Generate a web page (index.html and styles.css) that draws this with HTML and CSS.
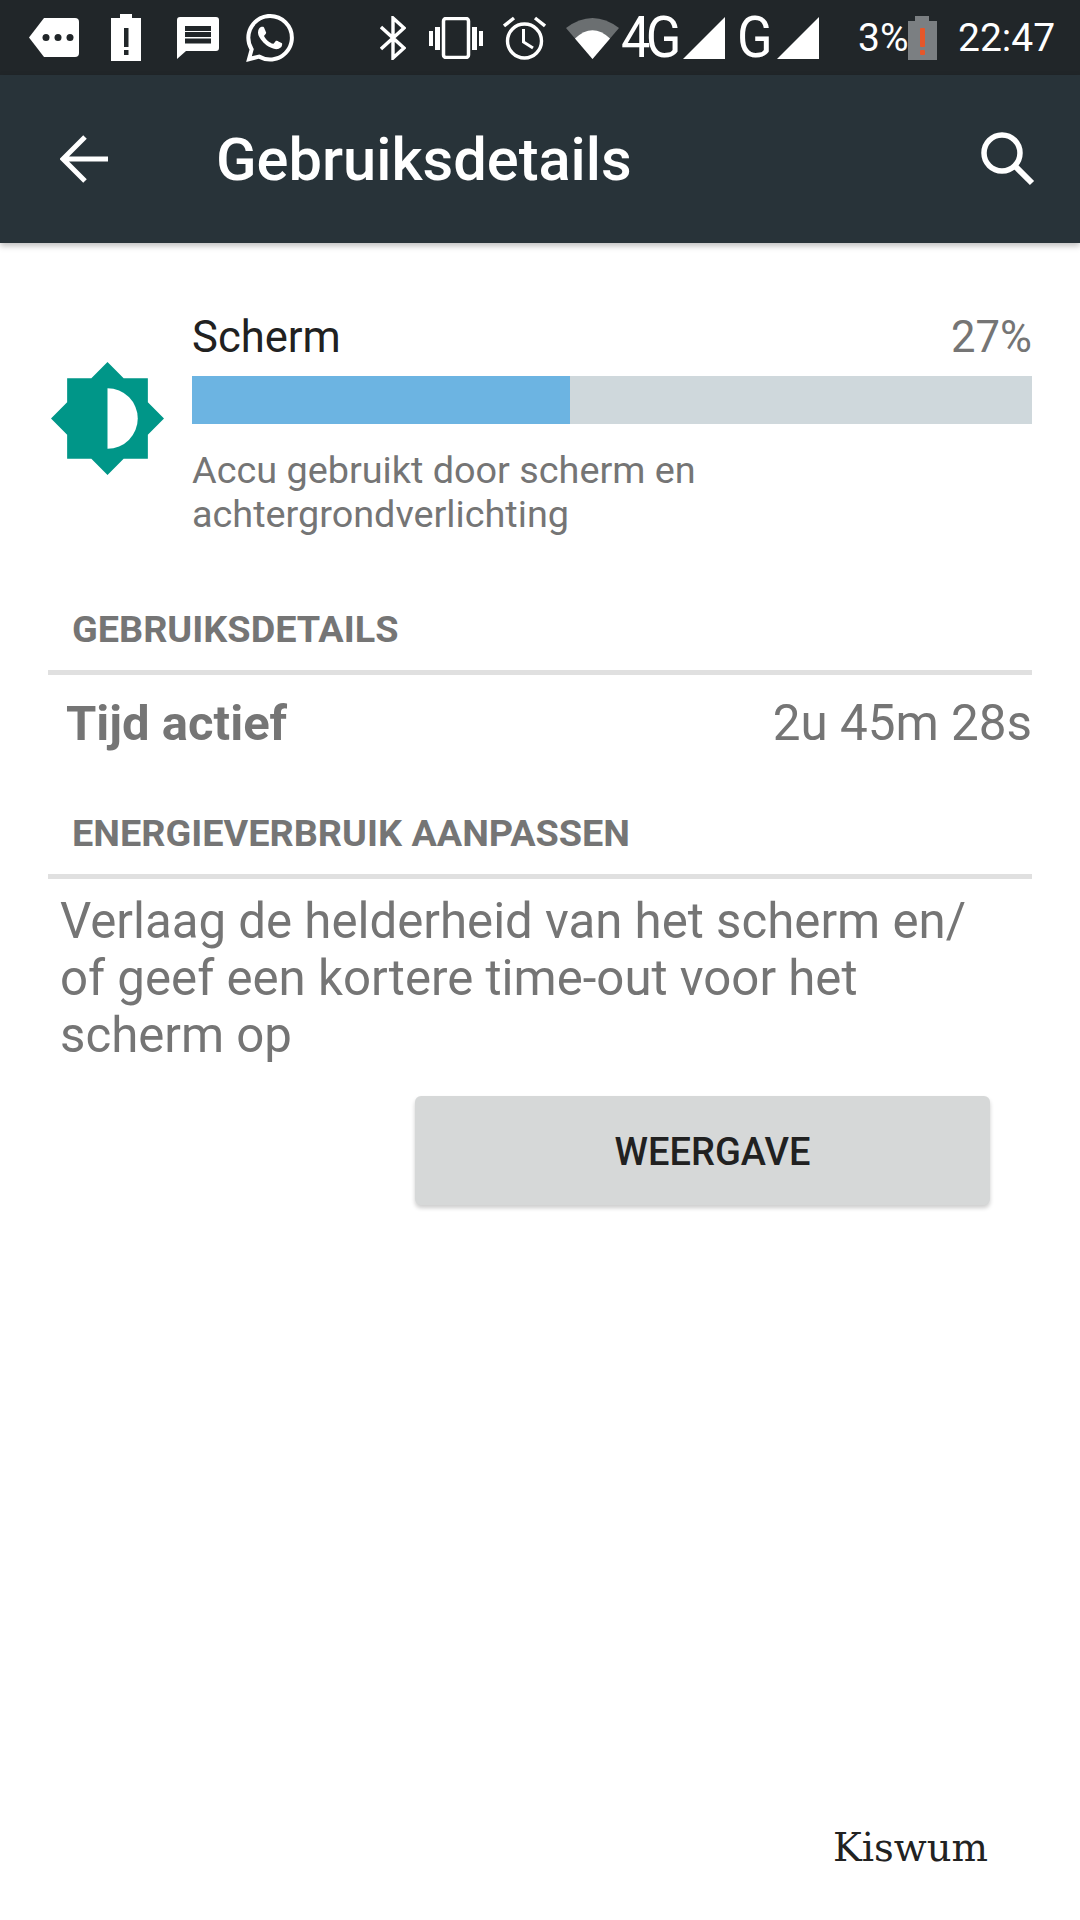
FILE: index.html
```html
<!DOCTYPE html>
<html lang="nl">
<head>
  <meta charset="UTF-8" />
  <meta name="viewport" content="width=device-width, initial-scale=1.0" />
  <title>Gebruiksdetails</title>
  <link rel="stylesheet" href="styles.css">
</head>
<body>

<!-- Status Bar -->
<div class="status-bar">
  <svg class="icon-tag" width="50" height="39" viewBox="0 0 50 39">
    <path fill="#fff" d="M15 0H46a4 4 0 0 1 4 4V35a4 4 0 0 1-4 4H15L0 19.5Z"/>
    <circle cx="17" cy="19.5" r="3.5" fill="#212629"/>
    <circle cx="29" cy="19.5" r="3.5" fill="#212629"/>
    <circle cx="41" cy="19.5" r="3.5" fill="#212629"/>
  </svg>
  <svg class="icon-battery" width="30" height="47" viewBox="0 0 30 47">
    <path fill="#fff" d="M9 0H21V4H30V47H0V4H9Z"/>
    <rect x="13" y="14" width="4.5" height="19" fill="#212629"/>
    <rect x="13" y="36" width="4.5" height="5" fill="#212629"/>
  </svg>
  <svg class="icon-message" width="42" height="42" viewBox="0 0 42 42">
    <path fill="#fff" d="M3 0H39a3 3 0 0 1 3 3V31a3 3 0 0 1-3 3H9L0 42V3a3 3 0 0 1 3-3Z"/>
    <rect x="8" y="9" width="26" height="5" fill="#212629"/>
    <rect x="8" y="15" width="26" height="5" fill="#212629"/>
    <rect x="8" y="21.5" width="26" height="5" fill="#212629"/>
  </svg>
  <svg class="icon-whatsapp" width="48" height="48" viewBox="0 0 24 24">
    <path fill="#fff" d="M17.472 14.382c-.297-.149-1.758-.867-2.03-.967-.273-.099-.471-.148-.67.15-.197.297-.767.966-.94 1.164-.173.199-.347.223-.644.075-.297-.15-1.255-.463-2.39-1.475-.883-.788-1.48-1.761-1.653-2.059-.173-.297-.018-.458.13-.606.134-.133.298-.347.446-.52.149-.174.198-.298.298-.497.099-.198.05-.371-.025-.52-.075-.149-.669-1.612-.916-2.207-.242-.579-.487-.5-.669-.51-.173-.008-.371-.01-.57-.01-.198 0-.52.074-.792.372-.272.297-1.04 1.016-1.04 2.479 0 1.462 1.065 2.875 1.213 3.074.149.198 2.096 3.2 5.077 4.487.709.306 1.262.489 1.694.625.712.227 1.36.195 1.871.118.571-.085 1.758-.719 2.006-1.413.248-.694.248-1.289.173-1.413-.074-.124-.272-.198-.57-.347m-5.421 7.403h-.004a9.87 9.87 0 01-5.031-1.378l-.361-.214-3.741.982.998-3.648-.235-.374a9.86 9.86 0 01-1.51-5.26c.001-5.45 4.436-9.884 9.888-9.884 2.64 0 5.122 1.03 6.988 2.898a9.825 9.825 0 012.893 6.994c-.003 5.45-4.437 9.884-9.885 9.884m8.413-18.297A11.815 11.815 0 0012.05 0C5.495 0 .16 5.335.157 11.892c0 2.096.547 4.142 1.588 5.945L.057 24l6.305-1.654a11.882 11.882 0 005.683 1.448h.005c6.554 0 11.89-5.335 11.893-11.893a11.821 11.821 0 00-3.48-8.413z"/>
  </svg>
  <svg class="icon-bluetooth" width="26" height="44" viewBox="0 0 26 44">
    <path fill="none" stroke="#fff" stroke-width="3.4" d="M1 11L24 32 13 42V2L24 12 1 33"/>
  </svg>
  <svg class="icon-vibrate" width="54" height="42" viewBox="0 0 54 42">
    <rect x="14.5" y="1.5" width="25" height="39" rx="2.5" fill="none" stroke="#fff" stroke-width="3.5"/>
    <rect x="0" y="14" width="4" height="15" fill="#fff"/>
    <rect x="6" y="10" width="5" height="23" fill="#fff"/>
    <rect x="43" y="10" width="5" height="23" fill="#fff"/>
    <rect x="50" y="14" width="4" height="15" fill="#fff"/>
  </svg>
  <svg class="icon-alarm" width="43" height="44" viewBox="0 0 43 44">
    <circle cx="21.5" cy="25" r="17" fill="none" stroke="#fff" stroke-width="3.4"/>
    <path fill="none" stroke="#fff" stroke-width="3" d="M20.5 13V26L30 32"/>
    <path fill="none" stroke="#fff" stroke-width="3.4" d="M1 10L11 2M42 10L32 2"/>
  </svg>
  <svg class="icon-wifi" width="53" height="43" viewBox="0 0 53 43">
    <path fill="#6b6f71" d="M0 12Q26.5-8 53 12L26.5 43Z"/>
    <path fill="#fff" d="M9 22.5Q26.5 6 44 22.5L26.5 43Z"/>
  </svg>
  <span class="net-label net-4g">4G</span>
  <svg class="icon-signal" width="42" height="42" viewBox="0 0 42 42">
    <path fill="#fff" d="M0 42L42 0V42Z"/>
  </svg>
  <span class="net-label net-g">G</span>
  <svg class="icon-signal-2" width="42" height="42" viewBox="0 0 42 42">
    <path fill="#fff" d="M0 42L42 0V42Z"/>
  </svg>
  <span class="battery-level">3%</span>
  <svg class="icon-battery-low" width="29" height="44" viewBox="0 0 29 44">
    <path fill="#7b7f82" d="M7 0H21V5H29V44H0V5H7Z"/>
    <rect x="12" y="12" width="5" height="19" rx="1" fill="#e5572a"/>
    <rect x="12" y="34" width="5" height="5" rx="1" fill="#e5572a"/>
  </svg>
  <span class="clock">22:47</span>
</div>

<!-- App Bar -->
<div class="app-bar">
  <svg class="back-icon" width="48" height="48" viewBox="0 0 48 48">
    <path fill="none" stroke="#fff" stroke-width="5" d="M48 24H3M25 2L3 24 25 46"/>
  </svg>
  <h1>Gebruiksdetails</h1>
  <svg class="search-icon" width="54" height="54" viewBox="0 0 54 54">
    <circle cx="21" cy="21" r="18" fill="none" stroke="#fff" stroke-width="5.5"/>
    <path fill="none" stroke="#fff" stroke-width="6" d="M33 33L51 51"/>
  </svg>
</div>

<div class="content">
  <!-- Usage summary -->
  <div class="usage">
    <svg class="sun-icon" width="113" height="113" viewBox="0 0 112 112">
      <path fill="#009688" d="M56 0L72 16H96V40L112 56 96 72V96H72L56 112 40 96H16V72L0 56 16 40V16H40Z"/>
      <path fill="#fff" d="M56 26A30 30 0 0 1 56 86Z"/>
    </svg>
    <div class="usage-text">
      <div class="usage-head">
        <span class="usage-title">Scherm</span>
        <span class="usage-percent">27%</span>
      </div>
      <div class="bar"><div class="bar-fill" style="width: 45%"></div></div>
      <p class="usage-summary">Accu gebruikt door scherm en achtergrondverlichting</p>
    </div>
  </div>

  <!-- Details -->
  <h3 class="section-title section-first">GEBRUIKSDETAILS</h3>
  <div class="detail-row">
    <span class="detail-label">Tijd actief</span>
    <span class="detail-value">2u 45m 28s</span>
  </div>

  <h3 class="section-title">ENERGIEVERBRUIK AANPASSEN</h3>
  <p class="advice">Verlaag de helderheid van het scherm en/<br>of geef een kortere time-out voor het<br>scherm op</p>
  <div class="actions">
    <button class="action-button">WEERGAVE</button>
  </div>
</div>

<div class="watermark">Kiswum</div>

</body>
</html>
```

FILE: styles.css
```css
/* General Styles */
* {
  box-sizing: border-box;
}

body {
  font-family: Roboto, Arial, sans-serif;
  margin: 0;
  padding: 0;
  width: 1080px;
  height: 1920px;
  background-color: #ffffff;
  display: flex;
  flex-direction: column;
  overflow: hidden;
}

h1, h3, p {
  margin: 0;
}

svg {
  flex: none;
  display: block;
}

/* Status Bar */
.status-bar {
  height: 75px;
  padding-left: 29px;
  background-color: #212629;
  color: #fff;
  display: flex;
  align-items: center;
}

.icon-battery { margin-left: 32px; }
.icon-message { margin-left: 36px; }
.icon-whatsapp { margin-left: 27px; }
.icon-bluetooth { margin-left: 86px; }
.icon-vibrate { margin-left: 23px; }
.icon-alarm { margin-left: 20px; }
.icon-wifi { margin-left: 20px; }
.icon-signal { margin-left: 6px; }
.icon-signal-2 { margin-left: 8px; }
.icon-battery-low { margin-left: 2px; }

.net-label {
  font-size: 58px;
  font-weight: 400;
  line-height: 75px;
  transform-origin: left center;
  transform: scaleX(0.9);
}

.net-4g {
  width: 56px;
  margin-left: 2px;
  letter-spacing: -5px;
}

.net-g {
  width: 32px;
  margin-left: 12px;
}

.battery-level {
  width: 48px;
  margin-left: 39px;
  font-size: 39px;
  white-space: nowrap;
}

.clock {
  margin-left: 21px;
  font-size: 39px;
}

/* App Bar */
.app-bar {
  height: 168px;
  padding: 0 45px 0 60px;
  background-color: #283339;
  box-shadow: 0 3px 6px rgba(0, 0, 0, 0.25);
  display: flex;
  align-items: center;
}

.app-bar h1 {
  flex: 1;
  margin-left: 108px;
  padding-top: 2px;
  color: #fff;
  font-size: 59.6px;
  font-weight: 500;
}

/* Usage summary */
.content {
  padding: 0 48px;
}

.usage {
  margin-top: 68px;
  padding-left: 3px;
  display: flex;
  gap: 28px;
}

.sun-icon {
  margin-top: 51px;
}

.usage-text {
  flex: 1;
}

.usage-head {
  display: flex;
  justify-content: space-between;
  align-items: center;
  height: 50px;
  padding-top: 2px;
  font-size: 43.6px;
}

.usage-title {
  color: #212121;
}

.usage-percent {
  color: #757575;
}

.bar {
  height: 48px;
  margin-top: 15px;
  background-color: #cfd8dc;
}

.bar-fill {
  height: 100%;
  background-color: #6cb4e2;
}

.usage-summary {
  margin-top: 24px;
  color: #757575;
  font-size: 37.8px;
  line-height: 44px;
}

/* Sections */
.section-title {
  margin-top: 41px;
  padding: 0 24px 19px;
  border-bottom: 5px solid #e0e0e0;
  color: #757575;
  font-size: 37.8px;
  line-height: 43px;
  font-weight: 700;
}

.section-first {
  margin-top: 72px;
}

.detail-row {
  display: flex;
  justify-content: space-between;
  align-items: center;
  height: 96px;
  padding-left: 18px;
  font-size: 49px;
  color: #757575;
}

.detail-label {
  font-weight: 700;
}

.detail-value {
  font-size: 49.4px;
}

.advice {
  margin-top: 14px;
  padding-left: 12px;
  color: #757575;
  font-size: 49.2px;
  line-height: 57px;
}

.actions {
  margin-top: 32px;
  padding-left: 367px;
}

.action-button {
  display: block;
  width: 575px;
  height: 109px;
  padding: 2px 0 0 20px;
  border: 0;
  border-radius: 6px;
  background-color: #d6d8d8;
  box-shadow: 0 3px 4px rgba(0, 0, 0, 0.2);
  color: #212121;
  font-family: Roboto, Arial, sans-serif;
  font-size: 38px;
  font-weight: 500;
}

/* Watermark */
.watermark {
  margin-top: auto;
  margin-bottom: 50px;
  padding-right: 92px;
  text-align: right;
  color: #222;
  font-family: "DejaVu Serif", serif;
  font-size: 38.5px;
}
```
